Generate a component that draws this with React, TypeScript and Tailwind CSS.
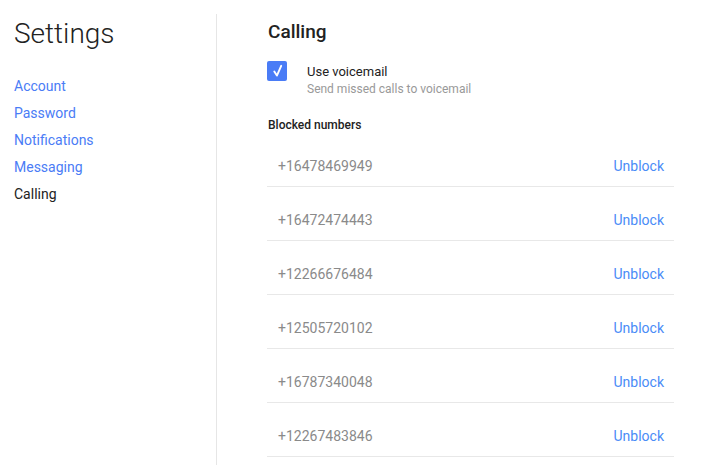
const NAV_ITEMS = ['Account', 'Password', 'Notifications', 'Messaging', 'Calling'];

const BLOCKED = [
  '+16478469949',
  '+16472474443',
  '+12266676484',
  '+12505720102',
  '+16787340048',
  '+12267483846',
];

export default function App() {
  return (
    <div className="flex h-[465px] w-[706px] overflow-hidden bg-white font-['Roboto',sans-serif] text-[#333]">
      {/* Sidebar */}
      <aside className="w-[216px] shrink-0 px-[14px] pt-[14px]">
        <h1 className="text-[28px] font-light leading-[40px] text-[#222]">Settings</h1>
        <nav className="mt-[19px] flex flex-col">
          {NAV_ITEMS.map((item) => (
            <a
              key={item}
              href="#"
              className={`text-[14px] leading-[27px] ${item === 'Calling' ? 'text-[#222]' : 'text-[#4a7cf6]'}`}
            >
              {item}
            </a>
          ))}
        </nav>
      </aside>

      <div className="mt-[14px] w-px bg-[#e6e6e6]" />

      {/* Content */}
      <main className="flex-1 pl-[50px] pt-[20px]">
        <h2 className="pl-px text-[19px] font-medium leading-[24px] text-[#222]">Calling</h2>

        <div className="mt-[17px] flex items-start">
          <div className="h-[20px] w-[20px] rounded-[2px] bg-[#4a7cf6]">
            <svg width="20" height="20" viewBox="0 0 20 20" fill="none">
              <path d="M7.3 10.6 L9.9 14.6 L14.2 4.8" stroke="white" strokeWidth="1.9" strokeLinecap="round" strokeLinejoin="round" />
            </svg>
          </div>
          <div className="ml-[20px] mt-[2px]">
            <div className="text-[13px] leading-[18px] text-[#222]">Use voicemail</div>
            <div className="text-[12px] leading-[16px] text-[#999]">Send missed calls to voicemail</div>
          </div>
        </div>

        <div className="mt-[21px] pl-px text-[12px] font-medium leading-[15px] text-[#222]">Blocked numbers</div>

        <ul className="w-[407px]">
          {BLOCKED.map((num) => (
            <li
              key={num}
              className="flex items-center justify-between border-b border-[#e8e8e8] pl-[11px] pr-[10px] pb-[10px] pt-[23px]"
            >
              <span className="text-[14px] leading-[20px] text-[#8a8a8a]">{num}</span>
              <a href="#" className="text-[14px] leading-[20px] text-[#4a8cf7]">Unblock</a>
            </li>
          ))}
        </ul>
      </main>
    </div>
  );
}
